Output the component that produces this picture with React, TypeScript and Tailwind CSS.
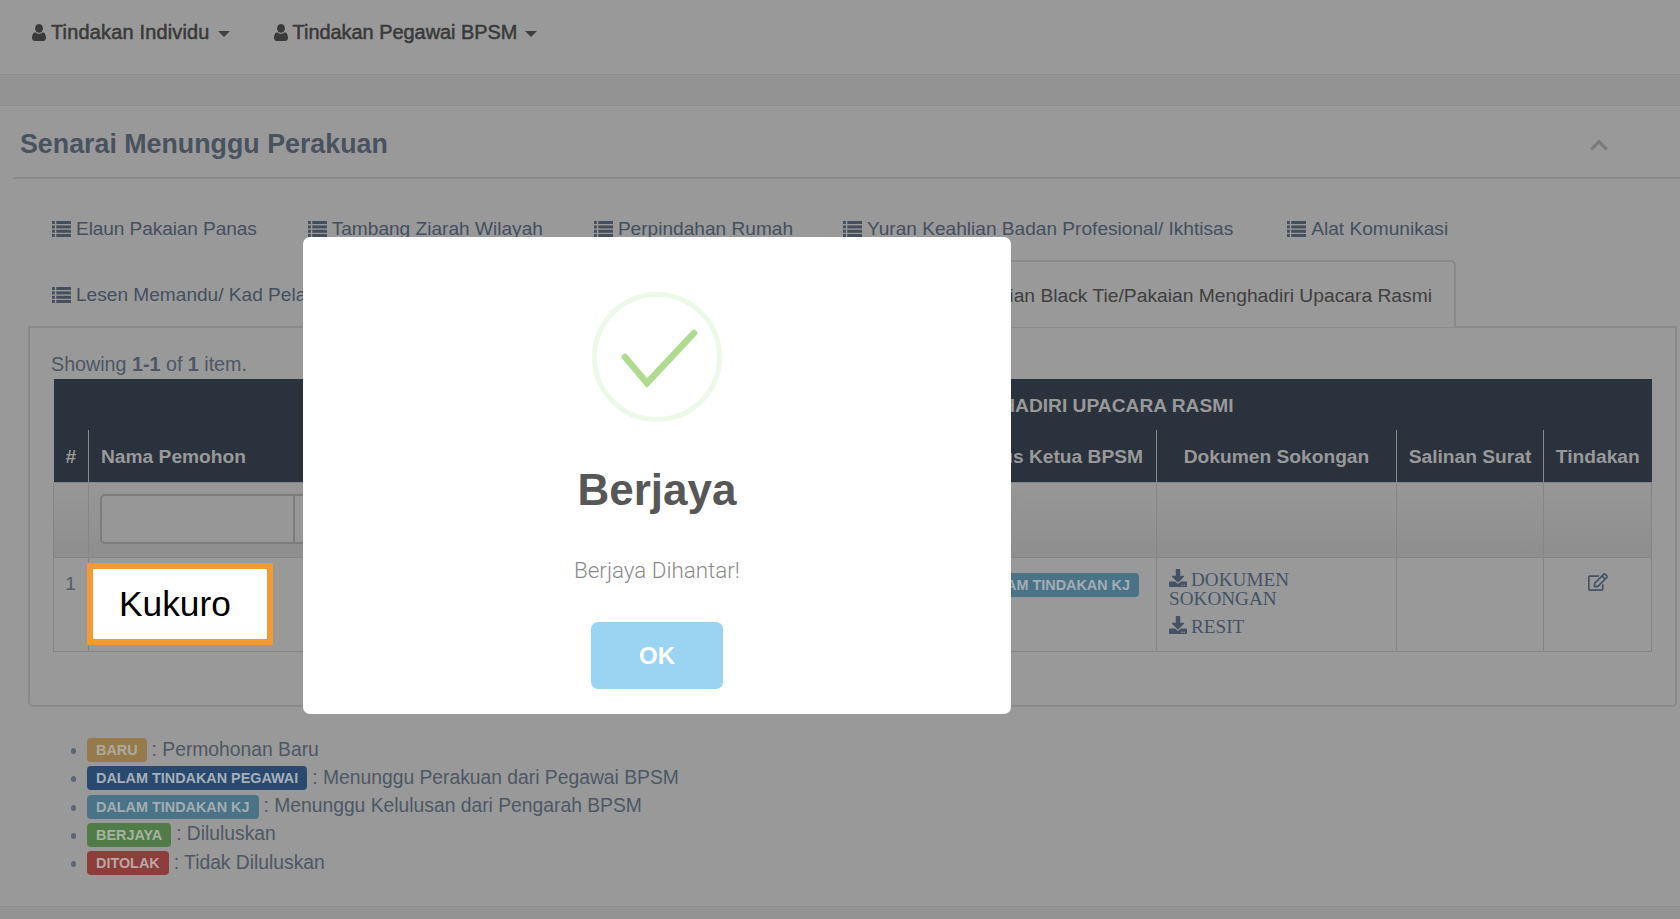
import React from 'react'
import { FaDownload, FaRegEdit, FaChevronUp } from 'react-icons/fa'

const sans = "font-['Liberation_Sans',Arial,sans-serif]"

function ListIcon() {
  return (
    <svg width="19" height="16" viewBox="0 0 20 16" preserveAspectRatio="none" fill="currentColor" className="inline-block mr-[5px] shrink-0">
      <rect x="0" y="0" width="3" height="3" />
      <rect x="4.5" y="0" width="15.5" height="3" />
      <rect x="0" y="4.4" width="3" height="3" />
      <rect x="4.5" y="4.4" width="15.5" height="3" />
      <rect x="0" y="8.8" width="3" height="3" />
      <rect x="4.5" y="8.8" width="15.5" height="3" />
      <rect x="0" y="13" width="3" height="3" />
      <rect x="4.5" y="13" width="15.5" height="3" />
    </svg>
  )
}

function UserIcon() {
  return (
    <svg width="14" height="17" viewBox="0 0 14 17" fill="currentColor" className="mr-[5px] shrink-0">
      <ellipse cx="7" cy="4.4" rx="3.9" ry="4.4" />
      <path d="M3.4 8.2 C4.4 9.3 5.6 9.8 7 9.8 C8.4 9.8 9.6 9.3 10.6 8.2 C12.8 8.6 14 10.6 14 13.8 C14 15.8 12.9 17 11.2 17 L2.8 17 C1.1 17 0 15.8 0 13.8 C0 10.6 1.2 8.6 3.4 8.2 Z" />
    </svg>
  )
}

function Caret() {
  return <span className="ml-[8px] mt-[3px] inline-block border-x-[6px] border-t-[6px] border-x-transparent border-t-[#3f3f3f]" />
}

function NavItem({ label, className }: { label: string; className?: string }) {
  return (
    <div className={`flex items-center text-[#3a3a3a] text-[19.9px] [-webkit-text-stroke:0.55px_#3a3a3a] ${className ?? ''}`}>
      <UserIcon />
      {label}
      <Caret />
    </div>
  )
}

function Tab({ label, className = 'pr-[26px]' }: { label: string; className?: string }) {
  return (
    <div className={`h-[66px] pl-[24px] pt-[4px] flex items-center whitespace-nowrap text-[#454f5d] ${className}`}>
      <ListIcon />
      {label}
    </div>
  )
}

const legend = [
  { badge: 'BARU', bg: 'bg-[#957a4c]', fg: 'text-[#aea99c]', text: ': Permohonan Baru' },
  { badge: 'DALAM TINDAKAN PEGAWAI', bg: 'bg-[#294a6e]', fg: 'text-[#a6afba]', text: ': Menunggu Perakuan dari Pegawai BPSM' },
  { badge: 'DALAM TINDAKAN KJ', bg: 'bg-[#4b7388]', fg: 'text-[#a2adb4]', text: ': Menunggu Kelulusan dari Pengarah BPSM' },
  { badge: 'BERJAYA', bg: 'bg-[#517c48]', fg: 'text-[#a8b2a4]', text: ': Diluluskan' },
  { badge: 'DITOLAK', bg: 'bg-[#8d3d3a]', fg: 'text-[#b8a8a6]', text: ': Tidak Diluluskan' },
]

export default function App() {
  return (
    <div className={`relative h-[919px] w-[1680px] overflow-hidden flex flex-col bg-[#999999] text-[19.1px] ${sans}`}>
      {/* Top nav */}
      <div className="h-[75px] shrink-0 border-b border-[#8e8e8e] flex items-center gap-[44px] pl-[32px] pb-[8px]">
        <NavItem label="Tindakan Individu" className="tracking-[0.2px]" />
        <NavItem label="Tindakan Pegawai BPSM" />
      </div>
      <div className="h-[31px] shrink-0 bg-[#939393] border-b border-[#8e8e8e]" />

      {/* Section header */}
      <div className="ml-[13px] h-[73px] shrink-0 border-b-2 border-[#8a8a8a] flex items-center justify-between pl-[7px] pr-[71px] pt-[6px]">
        <h2 className="text-[26.8px] font-bold text-[#4a525e]">Senarai Menunggu Perakuan</h2>
        <FaChevronUp size={20} className="text-[#7c7c7c]" />
      </div>

      {/* Tabs */}
      <div className="ml-[28px] mt-[15px] w-[1649px] shrink-0">
        <div className="flex">
          <Tab label="Elaun Pakaian Panas" className="pr-[27px] tracking-[-0.1px]" />
          <Tab label="Tambang Ziarah Wilayah" className="pr-[27px]" />
          <Tab label="Perpindahan Rumah" />
          <Tab label="Yuran Keahlian Badan Profesional/ Ikhtisas" className="pr-[30px]" />
          <Tab label="Alat Komunikasi" />
        </div>
        <div className="flex justify-between w-[1428px]">
          <Tab label="Lesen Memandu/ Kad Pelanggan" />
          <div className="h-[67px] pt-[3px] pl-[24px] pr-[22px] flex items-center whitespace-nowrap text-[19.25px] text-[#3f3f3f] border-x-2 border-t-2 border-[#8a8a8a] rounded-t-[5px] bg-[#999999] relative z-10 -mb-[2px]">
            <ListIcon />
            Elaun Pakaian Black Tie/Pakaian Menghadiri Upacara Rasmi
          </div>
        </div>

        {/* Tab panel */}
        <div className="h-[381px] border-2 border-[#8a8a8a] rounded-b-[5px] pl-[23px] pt-[22px]">
          <div className="h-[29px] leading-[28px] -ml-[2px] text-[19.7px] text-[#4e5763]">
            Showing <b>1-1</b> of <b>1</b> item.
          </div>
          <table className="table-fixed border-collapse w-[1598px]">
            <colgroup>
              <col className="w-[35px]" />
              <col className="w-[862px]" />
              <col className="w-[206px]" />
              <col className="w-[240px]" />
              <col className="w-[147px]" />
              <col className="w-[108px]" />
            </colgroup>
            <thead className="bg-[#2a323e] text-[#999999] font-bold text-[19.2px]">
              <tr className="h-[51px]">
                <th colSpan={6} className="text-right pr-[418px] pt-[3px]">
                  ELAUN PAKAIAN BLACK TIE/PAKAIAN MENGHADIRI UPACARA RASMI
                </th>
              </tr>
              <tr className="h-[52px] [&>th]:border-l [&>th]:border-[#8a8a8a] [&>th:first-child]:border-l-0 [&>th]:pt-[3px]">
                <th className="text-center">#</th>
                <th className="text-left pl-[12px]">Nama Pemohon</th>
                <th className="text-right pr-[13px] whitespace-nowrap">Status Ketua BPSM</th>
                <th className="text-center">Dokumen Sokongan</th>
                <th className="text-center">Salinan Surat</th>
                <th className="text-center">Tindakan</th>
              </tr>
            </thead>
            <tbody>
              <tr className="h-[75px] bg-gradient-to-b from-[#979797] to-[#8e8e8e] [&>td]:border [&>td]:border-[#858585]">
                <td />
                <td className="pl-[11px] pr-0">
                  <div className="flex h-[50px] mb-[1px] border-2 border-[#7c7c7c] rounded-l-[5px] bg-[#979797]">
                    <div className="w-[193px] border-r-2 border-[#7c7c7c]" />
                  </div>
                </td>
                <td />
                <td />
                <td />
                <td />
              </tr>
              <tr className="h-[94px] align-top [&>td]:border [&>td]:border-[#858585]">
                <td className="text-center pt-[12px] pr-[1px] text-[#555c66]">1</td>
                <td className="pt-[5px]">
                  <div className="relative -ml-[2px] w-[186px] h-[82px] border-[6px] border-[#f39a35] bg-white text-black text-[35.3px] flex items-center pl-[26px] pt-[2px]">
                    Kukuro
                  </div>
                </td>
                <td className="text-right pt-[12px] pr-[17px]">
                  <span className="inline-block h-[24px] leading-[24px] px-[9px] rounded-[4px] bg-[#4b7388] text-[#a2adb4] text-[14.4px] font-bold whitespace-nowrap">
                    DALAM TINDAKAN KJ
                  </span>
                </td>
                <td className="pl-[12px] pr-[40px] pt-[11px] font-['Liberation_Serif',serif] text-[19.2px] leading-[19.5px] text-[#465264]">
                  <div>
                    <FaDownload size={18} className="inline-block mr-[4px] align-[-1px]" />
                    DOKUMEN SOKONGAN
                  </div>
                  <div className="mt-[7px]">
                    <FaDownload size={18} className="inline-block mr-[4px] align-[-1px]" />
                    RESIT
                  </div>
                </td>
                <td />
                <td className="text-center pt-[10px] text-[#465264]">
                  <FaRegEdit size={20} className="inline-block" />
                </td>
              </tr>
            </tbody>
          </table>
        </div>
      </div>

      {/* Legend */}
      <ul className="ml-[87px] mt-[29px] shrink-0 text-[#4e5763] text-[19.3px]">
        {legend.map((item) => (
          <li key={item.badge} className="relative h-[28.25px] flex items-center whitespace-nowrap">
            <span className="absolute -left-[16px] top-[12px] w-[5px] h-[6px] rounded-full bg-[#5c6673]" />
            <span className={`h-[24px] leading-[24px] px-[9px] rounded-[4px] text-[14.4px] font-bold ${item.bg} ${item.fg}`}>{item.badge}</span>
            <span className="ml-[5px]">{item.text}</span>
          </li>
        ))}
      </ul>

      {/* Footer band */}
      <div className="absolute left-0 right-0 bottom-0 h-[13px] bg-[#939393] border-t border-[#8e8e8e]" />

      {/* Success dialog */}
      <div className="absolute left-[303px] top-[237px] w-[708px] h-[477px] bg-white rounded-[7px] flex flex-col items-center pt-[55px] z-20">
        <svg width="130" height="130" viewBox="0 0 130 130" fill="none">
          <circle cx="65" cy="65" r="62.5" stroke="#eef8e8" strokeWidth="5" />
          <path d="M33 65 L55 91 L102 41" stroke="#aedb8e" strokeWidth="6.5" strokeLinecap="round" strokeLinejoin="miter" />
        </svg>
        <div className="mt-[38px] h-[60px] leading-[60px] text-[44px] font-bold text-[#575757]">Berjaya</div>
        <div className="mt-[35px] h-[30px] leading-[30px] text-[22.4px] font-light text-[#8b8b8b] font-['Roboto',sans-serif]">Berjaya Dihantar!</div>
        <button className="mt-[37px] w-[132px] h-[67px] rounded-[7px] bg-[#9bd3f2] text-white text-[24px] font-bold pt-[1px]">OK</button>
      </div>
    </div>
  )
}
